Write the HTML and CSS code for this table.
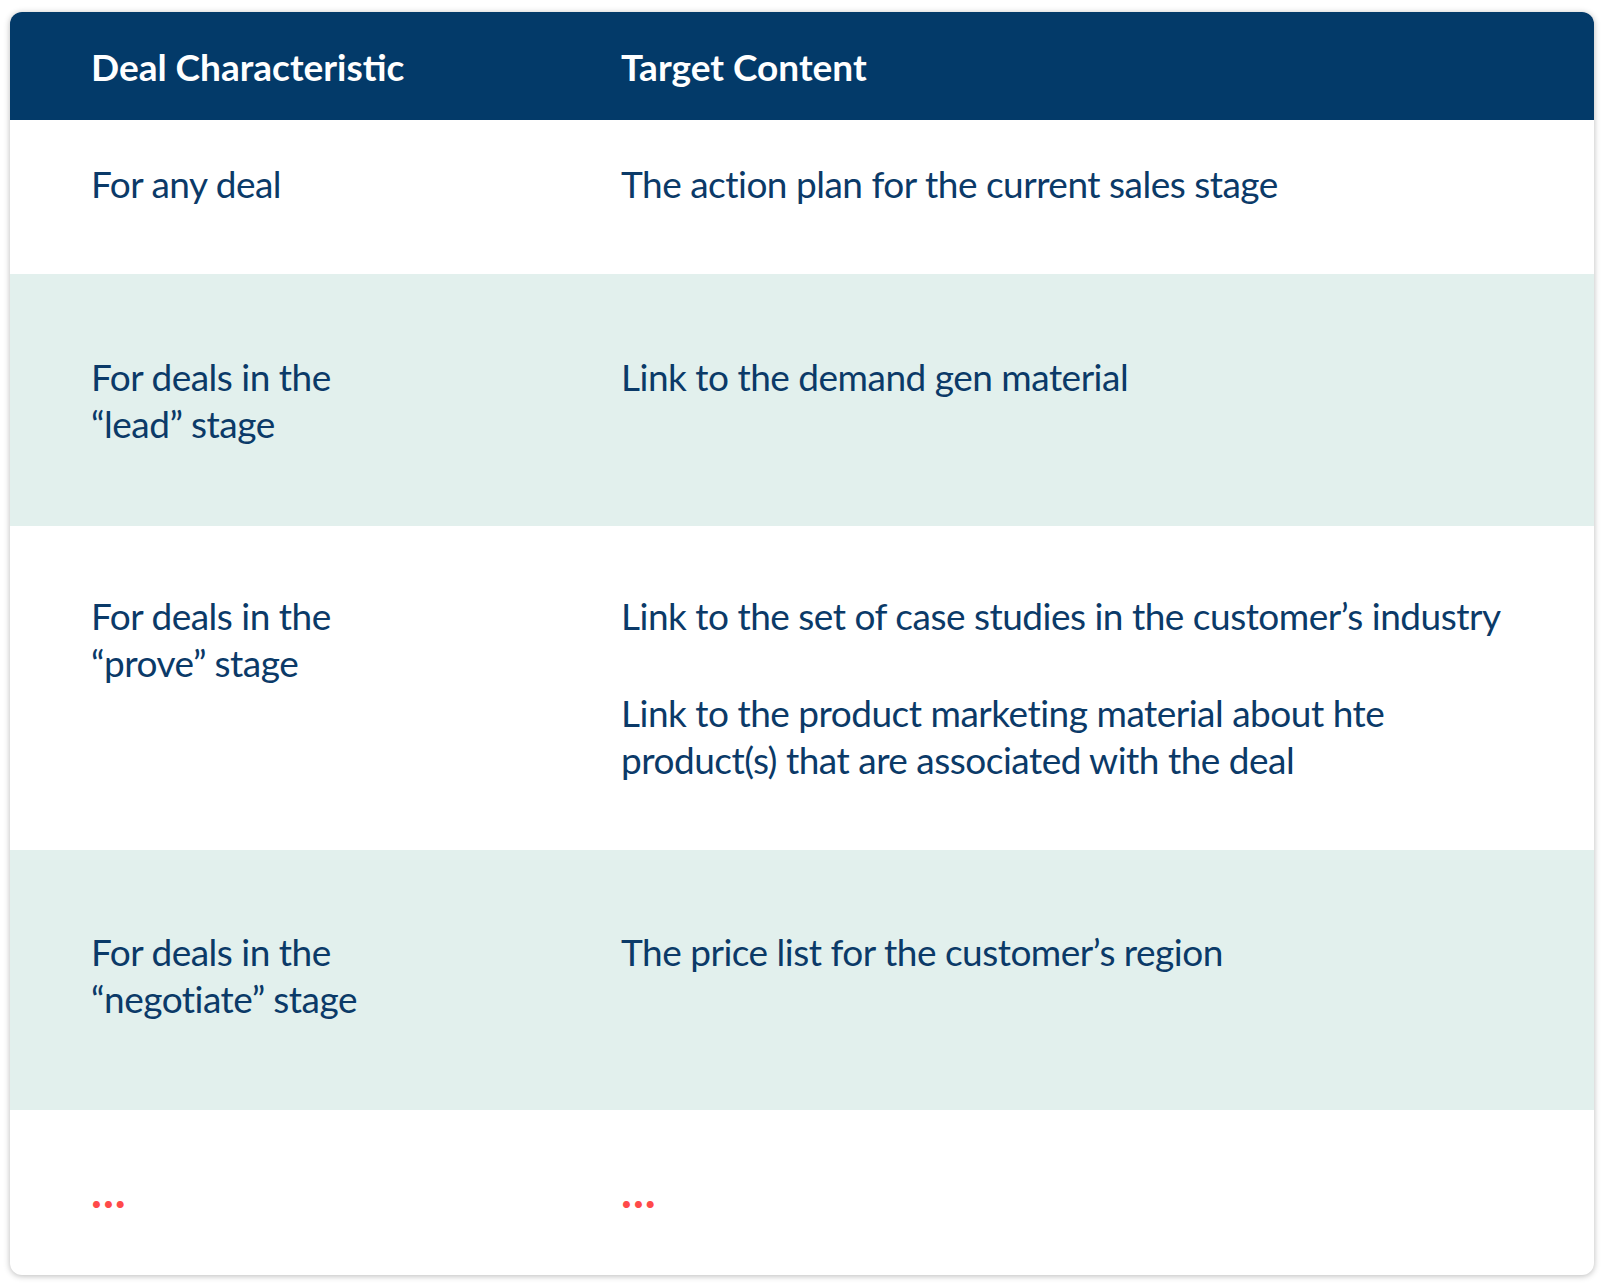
FILE: index.html
```html
<!DOCTYPE html>
<html lang="en">
<head>
    <meta charset="UTF-8">
    <meta name="viewport" content="width=device-width, initial-scale=1.0">
    <title>Deal Characteristic / Target Content</title>
    <link rel="stylesheet" href="styles.css">
</head>
<body>
    <div class="card">
        <div class="row head">
            <div class="cell">Deal Characteristic</div>
            <div class="cell">Target Content</div>
        </div>

        <div class="row row-any">
            <div class="cell">For any deal</div>
            <div class="cell">The action plan for the current sales stage</div>
        </div>

        <div class="row shaded row-lead">
            <div class="cell">For deals in the<br>“lead” stage</div>
            <div class="cell">Link to the demand gen material</div>
        </div>

        <div class="row row-prove">
            <div class="cell">For deals in the<br>“prove” stage</div>
            <div class="cell">
                <p>Link to the set of case studies in the customer’s industry</p>
                <p>Link to the product marketing material about hte<br>product(s) that are associated with the deal</p>
            </div>
        </div>

        <div class="row shaded row-negotiate">
            <div class="cell">For deals in the<br>“negotiate” stage</div>
            <div class="cell">The price list for the customer’s region</div>
        </div>

        <div class="row row-more">
            <div class="cell more">...</div>
            <div class="cell more">...</div>
        </div>
    </div>
</body>
</html>
```

FILE: styles.css
```css
body {
    margin: 0;
    background: #ffffff;
    font-family: Lato, "Noto Sans", sans-serif;
    color: #0b3a68;
}
.card {
    margin: 12px 10px;
    width: 1584px;
    background: #ffffff;
    border-radius: 12px;
    overflow: hidden;
    box-shadow: 0 1px 6px rgba(0, 0, 0, 0.28);
}
.row {
    display: grid;
    grid-template-columns: 530px 1fr;
    padding-left: 81px;
    padding-right: 30px;
    font-size: 37px;
    line-height: 47px;
    letter-spacing: -0.5px;
}
.cell p {
    margin: 0;
}
.cell p + p {
    margin-top: 50px;
}
.head {
    background: #033a69;
    color: #ffffff;
    font-weight: bold;
    letter-spacing: 0;
    padding-top: 31px;
    padding-bottom: 30px;
}
.shaded {
    background: #e2f0ed;
}
.row-any {
    padding-top: 40px;
    padding-bottom: 67px;
}
.row-lead {
    padding-top: 79px;
    padding-bottom: 79px;
}
.row-prove {
    padding-top: 66px;
    padding-bottom: 67px;
}
.row-negotiate {
    padding-top: 78px;
    padding-bottom: 88px;
}
.row-more {
    padding-top: 57px;
    padding-bottom: 61px;
}
.more {
    color: #ff4a4a;
    font-weight: bold;
    font-size: 46px;
    letter-spacing: 1px;
}
```
